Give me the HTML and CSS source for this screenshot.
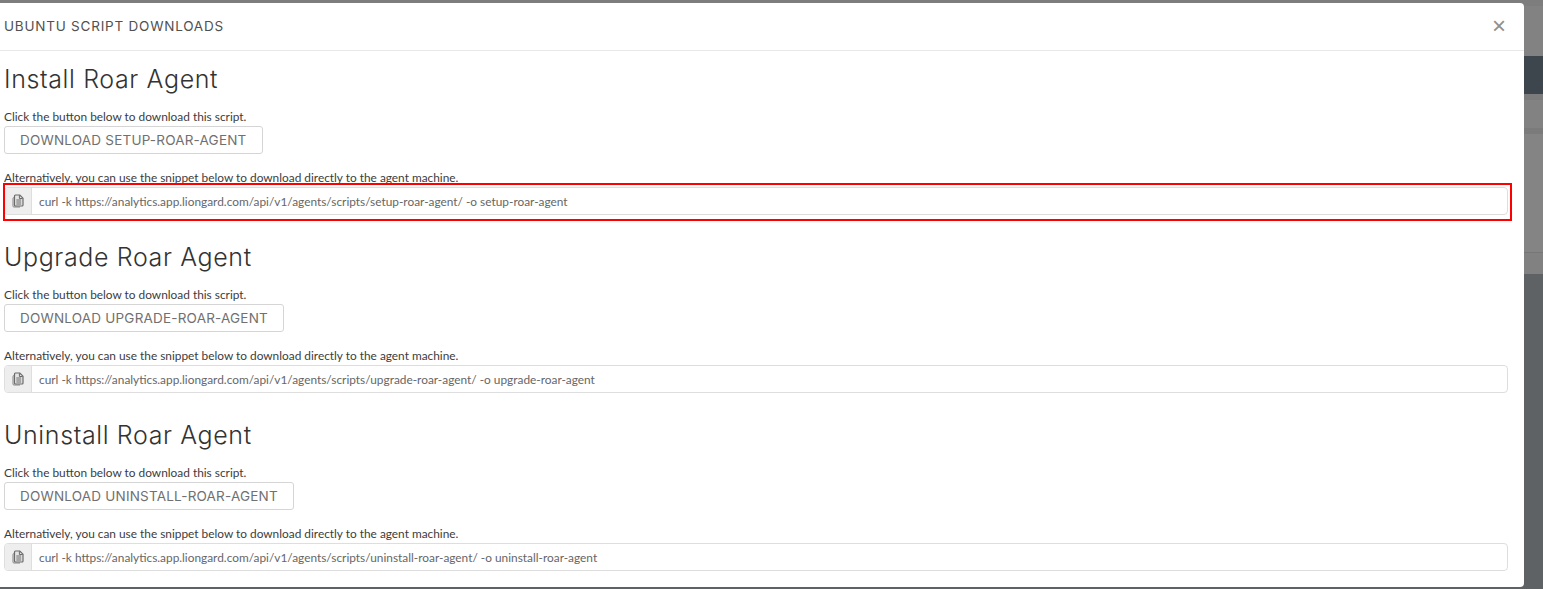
FILE: index.html
```html
<!DOCTYPE html>
<html lang="en">
<head>
<meta charset="utf-8">
<title>Ubuntu Script Downloads</title>
<link rel="stylesheet" href="styles.css">
</head>
<body>
<div class="backdrop">
  <div class="band band-top"></div>
  <div class="band band-dark"></div>
  <div class="band band-a"></div>
  <div class="band band-b"></div>
  <div class="band band-c"></div>
  <div class="band band-d"></div>
  <div class="band band-e"></div>
  <div class="band band-f"></div>
</div>
<main class="modal">
  <header class="modal-header">
    <h1 class="modal-title">UBUNTU SCRIPT DOWNLOADS</h1>
    <span class="close">×</span>
  </header>
  <div class="modal-body">
    <section class="script">
      <h2 class="script-title">Install Roar Agent</h2>
      <p class="hint">Click the button below to download this script.</p>
      <button class="download">DOWNLOAD SETUP-ROAR-AGENT</button>
      <p class="hint alt">Alternatively, you can use the snippet below to download directly to the agent machine.</p>
      <div class="snippet">
        <span class="addon"><svg class="copy" viewBox="0 0 12 14"><path d="M3 3.6H1.9a.9.9 0 0 0-.9.9v7.6a.9.9 0 0 0 .9.9H8" fill="none" stroke="#858585" stroke-width="1"/><path d="M3.4 1h4.4l3.2 3.2v6.9a.9.9 0 0 1-.9.9H3.4a.9.9 0 0 1-.9-.9V1.9a.9.9 0 0 1 .9-.9z" fill="#e4e4e4" stroke="#6a6a6a" stroke-width="1.2"/><path d="M4.3 6h4.9M4.3 8h4.9M4.3 10h4.9M7.4 1.3v3.2h3.2" fill="none" stroke="#6a6a6a" stroke-width="1"/></svg></span>
        <span class="command">curl -k https://analytics.app.liongard.com/api/v1/agents/scripts/setup-roar-agent/ -o setup-roar-agent</span>
      </div>
      <div class="highlight"></div>
    </section>
    <section class="script">
      <h2 class="script-title">Upgrade Roar Agent</h2>
      <p class="hint">Click the button below to download this script.</p>
      <button class="download">DOWNLOAD UPGRADE-ROAR-AGENT</button>
      <p class="hint alt">Alternatively, you can use the snippet below to download directly to the agent machine.</p>
      <div class="snippet">
        <span class="addon"><svg class="copy" viewBox="0 0 12 14"><path d="M3 3.6H1.9a.9.9 0 0 0-.9.9v7.6a.9.9 0 0 0 .9.9H8" fill="none" stroke="#858585" stroke-width="1"/><path d="M3.4 1h4.4l3.2 3.2v6.9a.9.9 0 0 1-.9.9H3.4a.9.9 0 0 1-.9-.9V1.9a.9.9 0 0 1 .9-.9z" fill="#e4e4e4" stroke="#6a6a6a" stroke-width="1.2"/><path d="M4.3 6h4.9M4.3 8h4.9M4.3 10h4.9M7.4 1.3v3.2h3.2" fill="none" stroke="#6a6a6a" stroke-width="1"/></svg></span>
        <span class="command">curl -k https://analytics.app.liongard.com/api/v1/agents/scripts/upgrade-roar-agent/ -o upgrade-roar-agent</span>
      </div>
    </section>
    <section class="script">
      <h2 class="script-title">Uninstall Roar Agent</h2>
      <p class="hint">Click the button below to download this script.</p>
      <button class="download">DOWNLOAD UNINSTALL-ROAR-AGENT</button>
      <p class="hint alt">Alternatively, you can use the snippet below to download directly to the agent machine.</p>
      <div class="snippet">
        <span class="addon"><svg class="copy" viewBox="0 0 12 14"><path d="M3 3.6H1.9a.9.9 0 0 0-.9.9v7.6a.9.9 0 0 0 .9.9H8" fill="none" stroke="#858585" stroke-width="1"/><path d="M3.4 1h4.4l3.2 3.2v6.9a.9.9 0 0 1-.9.9H3.4a.9.9 0 0 1-.9-.9V1.9a.9.9 0 0 1 .9-.9z" fill="#e4e4e4" stroke="#6a6a6a" stroke-width="1.2"/><path d="M4.3 6h4.9M4.3 8h4.9M4.3 10h4.9M7.4 1.3v3.2h3.2" fill="none" stroke="#6a6a6a" stroke-width="1"/></svg></span>
        <span class="command">curl -k https://analytics.app.liongard.com/api/v1/agents/scripts/uninstall-roar-agent/ -o uninstall-roar-agent</span>
      </div>
    </section>
  </div>
</main>
</body>
</html>
```
FILE: styles.css
```css
* { box-sizing: border-box; }
html, body { margin: 0; height: 100%; overflow: hidden; }
body {
  background: #808080;
  font-family: "Lato", sans-serif;
  color: #333;
  padding: 3px 19px 2px 0;
  position: relative;
}
.backdrop {
  position: absolute;
  inset: 0;
  display: flex;
  flex-direction: column;
}
.band-top { height: 56px; background: #828282; border-top: 6px solid #7d7d7d; }
.band-dark { height: 38px; background: #3e464d; }
.band-a { height: 6px; background: #7c7c7c; }
.band-b { height: 28px; background: #828282; }
.band-c { height: 6px; background: #7b7b7b; }
.band-d { height: 118px; background: #848484; }
.band-e { height: 22px; background: #818181; border-top: 1px solid #767676; }
.band-f { flex: 1; background: #5e6265; }
.modal {
  position: relative;
  height: 584px;
  background: #fff;
  border-radius: 0 4px 4px 0;
}
.modal-header {
  height: 48px;
  border-bottom: 1px solid #e9e9e9;
  display: flex;
  align-items: center;
  justify-content: space-between;
  padding: 0 18px 2px 4px;
}
.modal-title {
  margin: 0;
  font: 400 13.5px "Inter", sans-serif;
  letter-spacing: .78px;
  color: #505050;
}
.close { font: 400 24px/1 "Liberation Sans", sans-serif; color: #8f8f8f; }
.modal-body { padding: 0 16px 0 4px; }
.script { position: relative; height: 178px; padding-top: 14px; }
.script-title {
  margin: 0;
  height: 29px;
  font: 300 25px/29px "Inter", sans-serif;
  letter-spacing: .62px;
  color: #333;
}
.hint {
  margin: 15px 0 0;
  font-size: 11.87px;
  line-height: 16px;
  color: #3c3c3c;
}
.hint.alt { margin-top: 16px; }
.download {
  display: block;
  height: 28px;
  margin: 1px 0 0;
  padding: 0 15px;
  background: #fff;
  border: 1px solid #d5d5d5;
  border-radius: 3px;
  font: 400 13.5px "Inter", sans-serif;
  letter-spacing: .2px;
  color: #707070;
}
.snippet {
  display: flex;
  height: 28px;
  margin-top: 1px;
  border: 1px solid #dedede;
  border-radius: 4px;
  overflow: hidden;
}
.addon {
  width: 27px;
  background: #eee;
  border-right: 1px solid #dedede;
  display: flex;
  align-items: center;
  justify-content: center;
}
.copy { width: 12px; height: 14px; }
.command {
  padding-left: 7px;
  font-size: 11.87px;
  line-height: 28px;
  color: #666;
}
.highlight {
  position: absolute;
  left: -1px;
  right: -4px;
  top: 132px;
  height: 38px;
  border: 2px solid #f00;
}
```
